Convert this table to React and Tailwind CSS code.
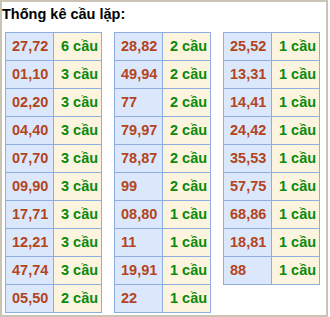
const t1 = [["27,72","6"],["01,10","3"],["02,20","3"],["04,40","3"],["07,70","3"],["09,90","3"],["17,71","3"],["12,21","3"],["47,74","3"],["05,50","2"]];
const t2 = [["28,82","2"],["49,94","2"],["77","2"],["79,97","2"],["78,87","2"],["99","2"],["08,80","1"],["11","1"],["19,91","1"],["22","1"]];
const t3 = [["25,52","1"],["13,31","1"],["14,41","1"],["24,42","1"],["35,53","1"],["57,75","1"],["68,86","1"],["18,81","1"],["88","1"]];

function T({ rows }) {
  return (
    <table className="border-collapse border border-[#8eaee0] w-[97px] self-start">
      <tbody>
        {rows.map(([n, c], i) => (
          <tr key={i} className="h-[28px]">
            <td className="border border-[#8eaee0] bg-[#dbe8fc] w-[48px] pl-[6px] p-0 text-[#b3441d] font-bold text-[14.5px] leading-none">{n}</td>
            <td className="border border-[#8eaee0] bg-[#fdf4df] pl-[7px] p-0 text-[#0a8a0a] font-bold text-[14.5px] leading-none">{c} cầu</td>
          </tr>
        ))}
      </tbody>
    </table>
  );
}

export default function App() {
  return (
    <div className="w-[328px] h-[317px] border-2 border-[#cbc4b6] bg-white" style={{ fontFamily: '"Liberation Sans", Arial, sans-serif' }}>
      <div className="pl-0 pt-[3px] h-[30px] text-[14.5px] font-bold text-black leading-[18px]">Thống kê cầu lặp:</div>
      <div className="flex gap-[12px] pl-[3px]">
        <T rows={t1} />
        <T rows={t2} />
        <T rows={t3} />
      </div>
    </div>
  );
}
